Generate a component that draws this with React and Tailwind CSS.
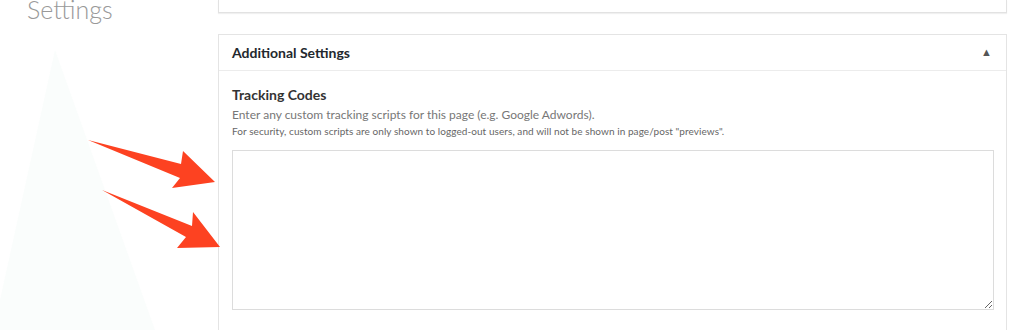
export default function App() {
  return (
    <div className="relative w-[1014px] h-[330px] overflow-hidden bg-white font-['Lato',sans-serif]">
      <svg className="absolute left-0 top-0" width="220" height="330" viewBox="0 0 220 330">
        <polygon points="55,50 0,300 0,330 155,330" fill="#fafdfc" />
      </svg>

      <div className="relative flex">
        <div className="w-[218px] shrink-0 pl-[27px]">
          <h1 className="text-[25px] leading-none font-light text-[#999] -mt-[3px]">Settings</h1>
        </div>

        <div className="flex-1 mr-[7px] flex flex-col gap-[21px]">
          <div className="h-[13px] bg-white border-x border-b border-[#e2e2e2] shadow-[0_1px_1px_rgba(0,0,0,0.06)]" />

          <div className="h-[310px] bg-white border border-[#e4e4e4]">
            <div className="h-[36px] flex items-center justify-between px-[13px] border-b border-[#ececec]">
              <span className="text-[14px] font-bold text-[#23282d]">Additional Settings</span>
              <span className="text-[11px] text-[#555] mr-[1px]">▲</span>
            </div>
            <div className="pl-[13px] pr-[12px] pt-[15px]">
              <div className="text-[14px] font-bold text-[#333] leading-[18px]">Tracking Codes</div>
              <div className="mt-[3px] text-[12px] text-[#777] leading-[16px]">
                Enter any custom tracking scripts for this page (e.g. Google Adwords).
              </div>
              <div className="mt-[1px] text-[10px] tracking-[0.07px] text-[#666] leading-[14px]">
                For security, custom scripts are only shown to logged-out users, and will not be shown in page/post "previews".
              </div>
              <textarea className="mt-[12px] block w-full h-[160px] border border-[#dcdcdc] bg-white outline-none resize-y" />
            </div>
          </div>
        </div>
      </div>

      <svg className="absolute left-0 top-0 pointer-events-none" width="240" height="330" viewBox="0 0 240 330">
        <polygon points="88,140 181,164 183,151 215,182 172,188 180,178" fill="#fd4221" />
        <polygon points="102,190 192,226 193,212 220,247 177,248 186,237" fill="#fd4221" />
      </svg>
    </div>
  );
}
